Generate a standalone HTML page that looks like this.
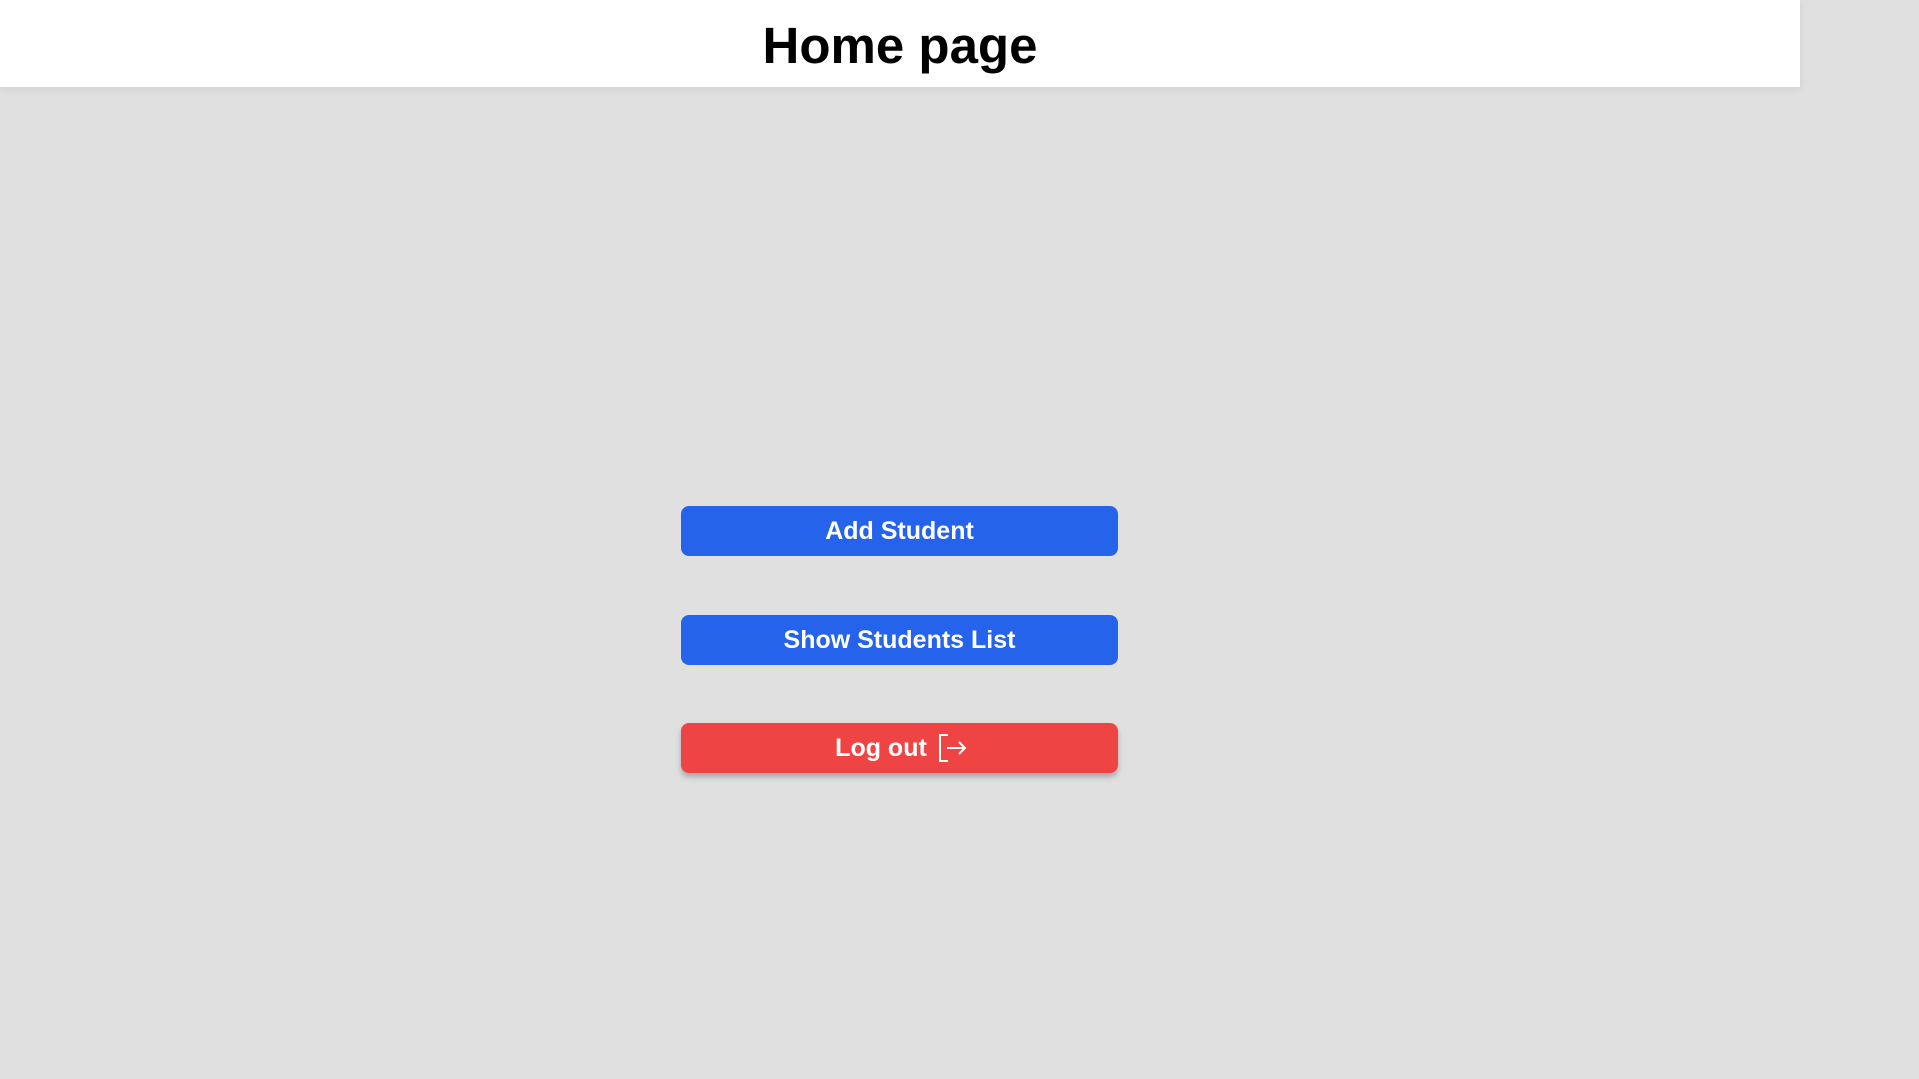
<!DOCTYPE html>
<html><head><style>
body{margin:0;width:1919px;height:1079px;background:#e0e0e0;font-family:"Liberation Sans",sans-serif;overflow:hidden;position:relative}
.hdr{position:absolute;left:0;top:0;width:1800px;height:87px;background:#fff;box-shadow:0 2px 8px rgba(0,0,0,.08);text-align:center}
.hdr h1{margin:0;font-size:51px;font-weight:bold;line-height:91px;color:#000}
.btn{position:absolute;left:681px;width:437px;height:50px;border-radius:8px;color:#fff;font-weight:bold;font-size:25px;display:flex;align-items:center;justify-content:center}
.b{background:#2563eb}
.r{background:#ef4444;box-shadow:0 4px 6px rgba(0,0,0,.25)}
</style></head><body>
<div class="hdr"><h1>Home page</h1></div>
<div class="btn b" style="top:506px">Add Student</div>
<div class="btn b" style="top:615px">Show Students List</div>
<div class="btn r" style="top:723px"><span style="margin-left:4px">Log out</span><svg style="margin-left:9px" width="32" height="30" viewBox="0 0 32 30" fill="none" stroke="#fff" stroke-width="2"><path d="M12 2H4V28H12"/><path d="M11 15H29M23 9L29 15L23 21"/></svg></div>
</body></html>
